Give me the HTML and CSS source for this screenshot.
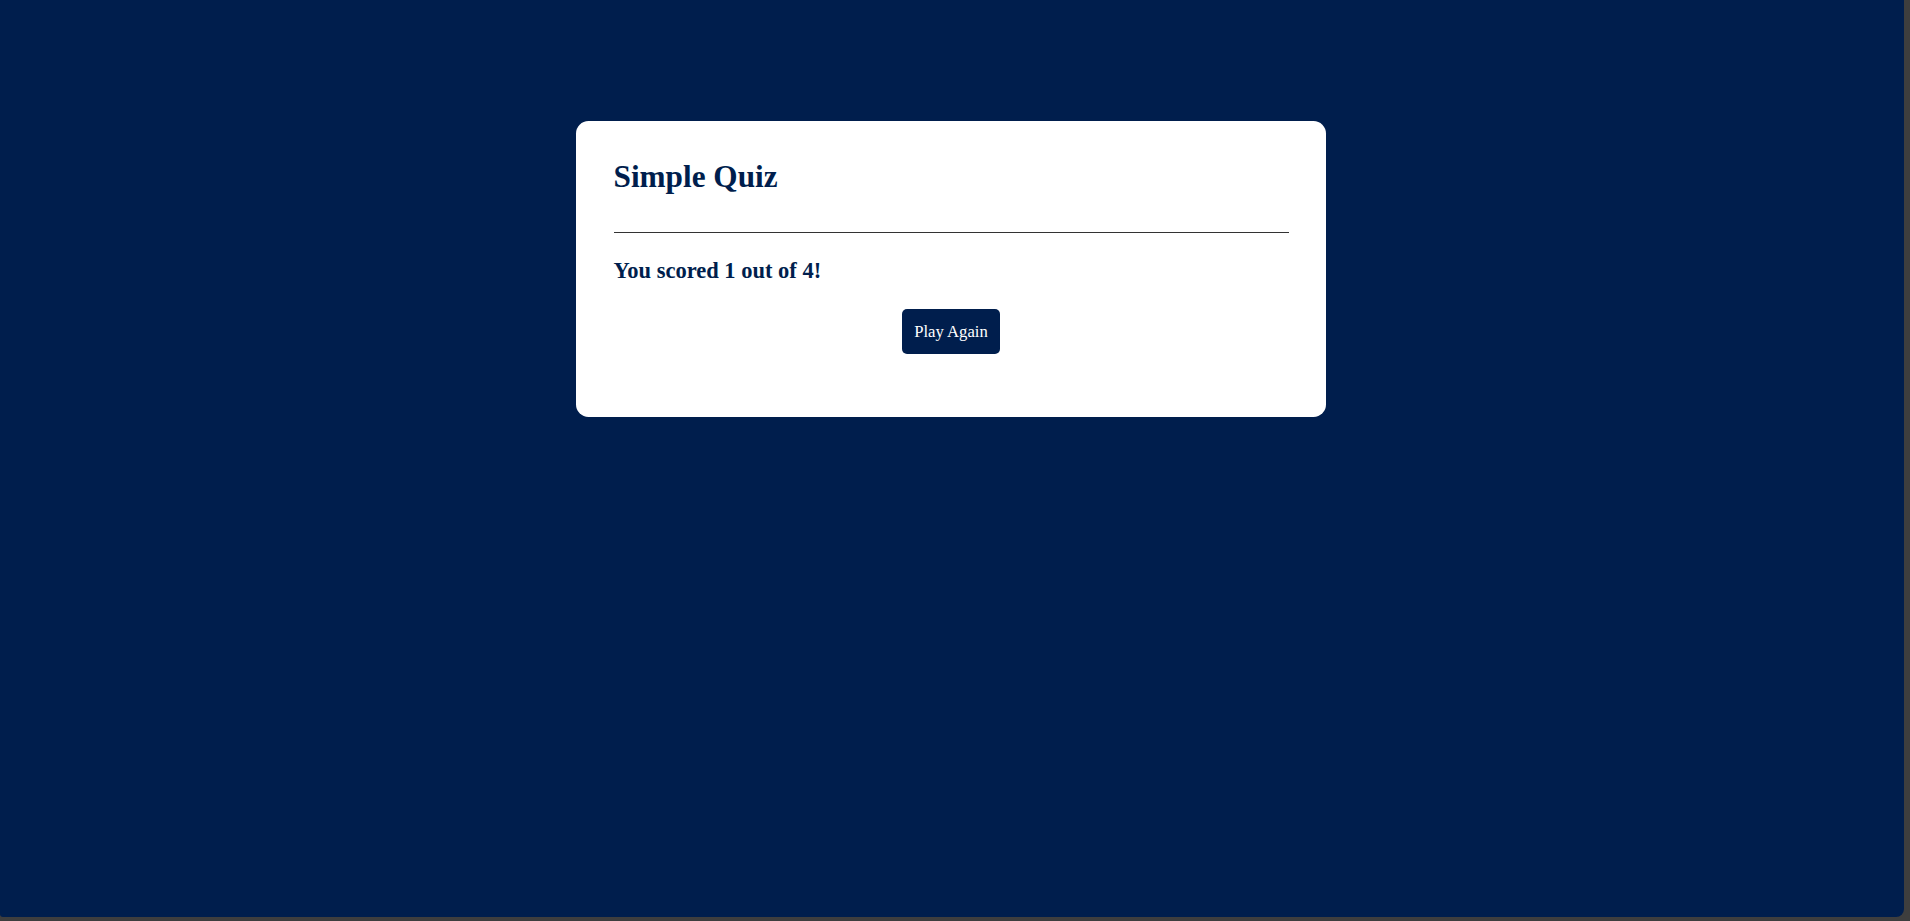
FILE: index.html
```html
<!DOCTYPE html>
<html lang="en">
<head>
<meta charset="utf-8">
<title>Simple Quiz</title>
<link rel="stylesheet" href="styles.css">
</head>
<body>
<div class="frame">
  <div class="app">
    <h1>Simple Quiz</h1>
    <div class="quiz">
      <h2 class="question">You scored 1 out of 4!</h2>
      <button class="btn">Play Again</button>
    </div>
  </div>
</div>
</body>
</html>
```

FILE: styles.css
```css
* {
  margin: 0;
  padding: 0;
  box-sizing: border-box;
}

html, body {
  height: 100%;
}

body {
  background: #3e3e3e;
  font-family: "Liberation Serif", "Times New Roman", serif;
  overflow: hidden;
}

.frame {
  width: 1904px;
  height: 917px;
  background: #001e4d;
  border-radius: 0 0 8px 3px;
  padding-top: 121px;
  padding-right: 2px;
}

.app {
  background: #fff;
  width: 750px;
  margin: 0 auto;
  border-radius: 12.5px;
  padding: 37.5px;
}

.app h1 {
  font-size: 31.25px;
  color: #001e4d;
  font-weight: 700;
  line-height: normal;
  border-bottom: 1px solid #333;
  padding-bottom: 37.5px;
}

.quiz {
  padding: 25px 0;
}

.question {
  font-size: 22.5px;
  color: #001e4d;
  font-weight: 700;
  line-height: normal;
}

.btn {
  display: block;
  margin: 25px auto 0;
  background: #001e4d;
  color: #fff;
  border: 0;
  border-radius: 5px;
  padding: 12.5px;
  font-family: "Liberation Serif", "Times New Roman", serif;
  font-size: 16.67px;
  font-weight: 400;
  line-height: normal;
  cursor: pointer;
}
```
